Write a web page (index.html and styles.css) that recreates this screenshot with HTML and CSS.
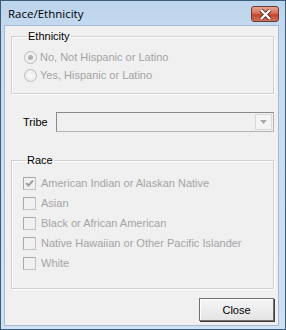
FILE: index.html
```html
<!DOCTYPE html>
<html lang="en">

<head>
    <meta charset="UTF-8">
    <title>Race/Ethnicity</title>
    <link rel="stylesheet" href="styles.css">
</head>

<body>
    <div class="window">
        <div class="titlebar">
            <span class="caption">Race/Ethnicity</span>
            <div class="close-x">
                <svg width="13" height="11" viewBox="0 0 13 11">
                    <path d="M2 1 L11 10 M11 1 L2 10" stroke="#5a2a20" stroke-width="4" />
                    <path d="M2 1 L11 10 M11 1 L2 10" stroke="#fff" stroke-width="2.4" />
                </svg>
            </div>
        </div>
        <div class="client">
            <fieldset class="group ethnicity">
                <legend>Ethnicity</legend>
                <label class="opt"><span class="radio checked"></span>No, Not Hispanic or Latino</label>
                <label class="opt"><span class="radio"></span>Yes, Hispanic or Latino</label>
            </fieldset>

            <div class="tribe-row">
                <span class="tribe-label">Tribe</span>
                <div class="combo">
                    <div class="combo-btn">
                        <svg width="7" height="4" viewBox="0 0 7 4"><path d="M0 0 H7 L3.5 4 Z" fill="#a8a8a8" /></svg>
                    </div>
                </div>
            </div>

            <fieldset class="group race">
                <legend>Race</legend>
                <label class="opt"><span class="check">
                        <svg width="9" height="9" viewBox="0 0 9 9"><path d="M1 4 L3.5 6.5 L8 1.5" stroke="#a0a0a0" stroke-width="2" fill="none" /></svg>
                    </span>American Indian or Alaskan Native</label>
                <label class="opt"><span class="check"></span>Asian</label>
                <label class="opt"><span class="check"></span>Black or African American</label>
                <label class="opt"><span class="check"></span>Native Hawaiian or Other Pacific Islander</label>
                <label class="opt"><span class="check"></span>White</label>
            </fieldset>

            <div class="buttons">
                <button class="btn">Close</button>
            </div>
        </div>
    </div>
</body>

</html>
```

FILE: styles.css
```css
html,
body {
    margin: 0;
    padding: 0;
}

body {
    width: 286px;
    height: 330px;
    font: 11px "Liberation Sans", Arial, sans-serif;
}

.window {
    width: 286px;
    height: 330px;
    box-sizing: border-box;
    border: 1px solid #3c5c7c;
    background: linear-gradient(#bcd4ec, #c8dcf0 40px, #cfe0f2);
    display: flex;
    flex-direction: column;
    padding: 0 6px 3px 3px;
}

.titlebar {
    height: 24px;
    display: flex;
    align-items: flex-start;
    justify-content: space-between;
}

.caption {
    font: 11.5px "Open Sans", "Liberation Sans", sans-serif;
    color: #000;
    margin: 5px 0 0 4px;
}

.close-x {
    width: 28px;
    height: 16px;
    margin-top: 5px;
    box-sizing: border-box;
    border: 1px solid #6b3a32;
    border-radius: 3px;
    background: linear-gradient(#e8a493, #d56f58 45%, #c3452a 55%, #d0705a);
    display: flex;
    align-items: center;
    justify-content: center;
}

.client {
    flex: 1;
    background: #f0f0f0;
    border: 1px solid #a6bbd1;
    padding: 4px 4px 0 6px;
}

.group {
    margin: 0;
    border: 1px solid #d0d0d0;
    box-shadow: inset 1px 1px 0 #fff, 1px 1px 0 #fff;
}

.group legend {
    padding: 0 1px;
    margin-left: 3px;
    color: #000;
    line-height: 13px;
}

.ethnicity {
    padding: 5px 0 9px 12px;
}

.race {
    padding: 6px 0 15px 11px;
}

.opt {
    display: flex;
    align-items: center;
    height: 18px;
    color: #a4a4a4;
}

.race .opt {
    height: 20px;
}

.radio {
    width: 13px;
    height: 13px;
    box-sizing: border-box;
    border-radius: 50%;
    border: 1px solid #bcbcbc;
    background: radial-gradient(#fafafa, #e6e6e6);
    margin-right: 3px;
    display: flex;
    align-items: center;
    justify-content: center;
}

.radio.checked::after {
    content: "";
    width: 5px;
    height: 5px;
    border-radius: 50%;
    background: #b0b0b0;
}

.check {
    width: 13px;
    height: 13px;
    box-sizing: border-box;
    border: 1px solid #c4c4c4;
    border-top-color: #a8a8a8;
    border-left-color: #a8a8a8;
    background: #f0f0f0;
    margin-right: 5px;
    display: flex;
    align-items: center;
    justify-content: center;
}

.tribe-row {
    display: flex;
    align-items: center;
    height: 20px;
    margin: 18px 0 22px 12px;
}

.tribe-label {
    color: #000;
    width: 33px;
}

.combo {
    flex: 1;
    height: 20px;
    box-sizing: border-box;
    border: 1px solid #b4b4b4;
    border-top-color: #8a8a8a;
    border-left-color: #8a8a8a;
    background: #f0f0f0;
    display: flex;
    justify-content: flex-end;
    padding: 1px;
}

.combo-btn {
    width: 15px;
    border: 1px solid #d8d8d8;
    background: #f4f4f4;
    display: flex;
    align-items: center;
    justify-content: center;
}

.buttons {
    display: flex;
    justify-content: flex-end;
    margin-top: 9px;
}

.btn {
    width: 75px;
    height: 23px;
    font: 11px "Liberation Sans", Arial, sans-serif;
    color: #000;
    background: linear-gradient(#f6f6f6, #e4e4e4);
    border: 1px solid #707070;
    box-shadow: inset 1px 1px 0 #fff, 1px 1px 0 #404040;
    padding: 0;
}
```
